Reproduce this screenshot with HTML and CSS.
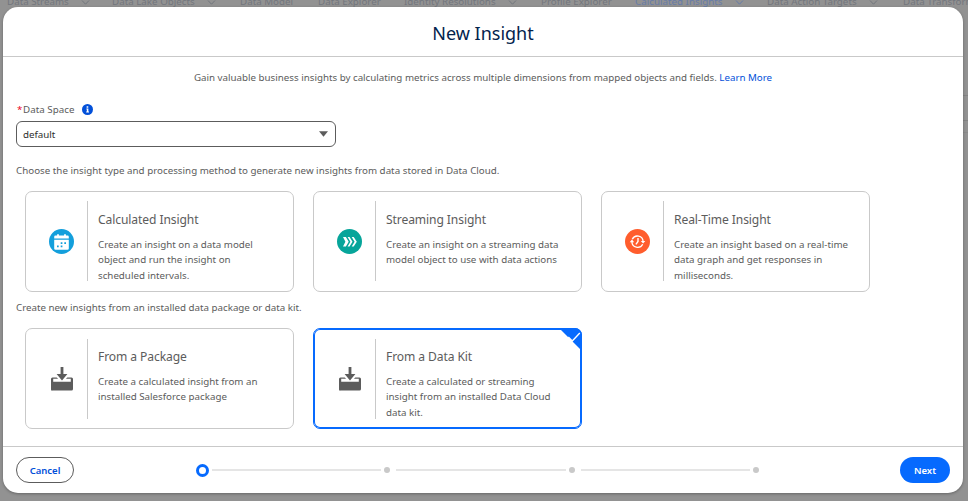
FILE: index.html
```html
<!DOCTYPE html>
<html lang="en">
<head>
<meta charset="utf-8">
<title>New Insight</title>
<link rel="stylesheet" href="styles.css">
</head>
<body>
<svg width="0" height="0" class="defs">
  <symbol id="chev" viewBox="0 0 9 6"><path d="M1 .5l3.500 3.700L8 .5" fill="none" stroke="currentColor"/></symbol>
  <symbol id="package" viewBox="0 0 22 24">
    <path d="M9.600 0h2.800v7h4L11 13.500 5.600 7h4z"/>
    <path d="M1.500 10.500h4.200l1.400 1.300H2.200v3h17.600v-3h-4.900l1.400-1.300h4.200q1.500 0 1.500 1.500v10q0 1.500-1.500 1.500h-19Q0 24 0 22.500V12q0-1.500 1.500-1.500z"/>
  </symbol>
</svg>
<nav class="tabs">
  <span class="tab">Data Streams<svg><use href="#chev"/></svg></span>
  <span class="tab">Data Lake Objects<svg><use href="#chev"/></svg></span>
  <span class="tab">Data Model</span>
  <span class="tab">Data Explorer</span>
  <span class="tab">Identity Resolutions<svg><use href="#chev"/></svg></span>
  <span class="tab">Profile Explorer</span>
  <span class="tab active">Calculated Insights<svg><use href="#chev"/></svg></span>
  <span class="tab">Data Action Targets<svg><use href="#chev"/></svg></span>
  <span class="tab">Data Transforms</span>
</nav>
<main class="modal">
  <header class="head"><h1>New Insight</h1></header>
  <section class="body">
    <p class="intro"><span>Gain valuable business insights by calculating metrics across multiple dimensions from mapped objects and fields.</span> <a>Learn More</a></p>
    <div class="label"><b>*</b><span>Data Space</span>
      <svg width="11" height="11" viewBox="0 0 10 10"><circle cx="5" cy="5" r="5" fill="#0250d9"/><path d="M4.200 2h1.500v1.300H4.200zM4 4.200h1.800v2.700h.6v.9H3.800v-.9h.6V5.100H4z" fill="#fff"/></svg>
    </div>
    <div class="select"><span>default</span><svg width="9" height="6" viewBox="0 0 9 6"><path d="M0 .2h9L4.500 5.800z" fill="#5c5c5c"/></svg></div>
    <p class="hint choose">Choose the insight type and processing method to generate new insights from data stored in Data Cloud.</p>
    <div class="cards">
      <article class="card">
        <div class="icon"><svg width="25" height="25" viewBox="0 0 25 25"><circle cx="12.500" cy="12.500" r="12.500" fill="#139fdc"/><path d="M6.500 6.500h1.600V6q0-.9.900-.9t.9.900v.5h5.200V6q0-.9.900-.9t.9.900v.5h1.600q1.300 0 1.300 1.300v1.700H5.200V7.800q0-1.300 1.300-1.300zM5.200 10.700h14.600v8.700q0 1.300-1.300 1.300h-12q-1.300 0-1.300-1.300z" fill="#fff"/><path d="M11.700 13.200h1.700v1.700h-1.700zM15.300 13.200H17v1.700h-1.700zM8 16.500h1.700v1.700H8zM11.700 16.500h1.700v1.700h-1.700z" fill="#139fdc"/></svg></div>
        <div class="copy"><h2>Calculated Insight</h2><p>Create an insight on a data model<br>object and run the insight on<br>scheduled intervals.</p></div>
      </article>
      <article class="card">
        <div class="icon"><svg width="25" height="25" viewBox="0 0 25 25"><circle cx="12.500" cy="12.500" r="12.500" fill="#06a59a"/><path d="M6 8h2.900l2.800 4.700-2.800 4.800H6l2.400-4.800zM10.600 8h1.900l3 4.700-3 4.800h-1.900l2.800-4.800zM14.700 8h2l3.100 4.700-3.100 4.800h-2l2.900-4.800z" fill="#fff"/></svg></div>
        <div class="copy"><h2>Streaming Insight</h2><p>Create an insight on a streaming data<br>model object to use with data actions</p></div>
      </article>
      <article class="card">
        <div class="icon"><svg width="25" height="25" viewBox="0 0 25 25"><circle cx="12.500" cy="12.500" r="12.500" fill="#ff5d2d"/><g fill="none" stroke="#fff" stroke-width="1.300"><path d="M7.300 10.200a5.700 5.700 0 0 1 10.800 2.300M17.700 15.200a5.700 5.700 0 0 1-10.800-2.400"/><path d="M13 9v3.500L10.900 15.300" stroke-width="1.400"/></g><path d="M15.800 11.900h4.500l-2.200 2.700zM4.700 13.300h4.500L7 10.600z" fill="#fff"/></svg></div>
        <div class="copy"><h2>Real-Time Insight</h2><p>Create an insight based on a real-time<br>data graph and get responses in<br>milliseconds.</p></div>
      </article>
    </div>
    <p class="hint create">Create new insights from an installed data package or data kit.</p>
    <div class="cards low">
      <article class="card">
        <div class="icon"><svg width="22" height="24" fill="#5c5c5c"><use href="#package"/></svg></div>
        <div class="copy"><h2>From a Package</h2><p>Create a calculated insight from an<br>installed Salesforce package</p></div>
      </article>
      <article class="card selected">
        <div class="icon"><svg width="22" height="24" fill="#5c5c5c"><use href="#package"/></svg></div>
        <div class="copy"><h2>From a Data Kit</h2><p>Create a calculated or streaming<br>insight from an installed Data Cloud<br>data kit.</p></div>
        <svg class="corner" width="23" height="23" viewBox="0 0 23 23"><path d="M0 0h23v23z" fill="#066afe"/><path d="M9.300 9.100l4 4 7.500-8" fill="none" stroke="#fff" stroke-width="1.400"/></svg>
      </article>
    </div>
  </section>
  <footer class="foot">
    <button class="cancel">Cancel</button>
    <div class="steps"><i class="now"></i><s></s><i></i><s></s><i></i><s></s><i></i></div>
    <button class="next">Next</button>
  </footer>
</main>
</body>
</html>
```
FILE: styles.css
```css
* { box-sizing: border-box; }
body { margin: 0; width: 968px; height: 501px; overflow: hidden; position: relative; background: linear-gradient(#838383, #838383) 963px 95px / 5px 1px no-repeat, linear-gradient(#838383, #838383) 963px 120px / 5px 1px no-repeat, linear-gradient(#8a8a8a, #8a8a8a) 963px 132px / 5px 1px no-repeat, #929292; font: 9.750px/15px "Noto Sans", sans-serif; color: #5c5c5c; }
h1, h2, p { margin: 0; font-weight: 400; white-space: nowrap; }
.defs { position: absolute; }
.tabs { height: 7px; display: grid; grid-template-columns: 105px 128px 78px 86px 137px 94px 132px 136px 110px; padding-left: 7px; white-space: nowrap; color: #72767d; line-height: 4px; letter-spacing: .02px; }
.tab svg { width: 9px; height: 6px; margin-left: 12px; vertical-align: -1px; }
.tab.active { color: #667ba8; }
.modal { position: relative; display: flex; flex-direction: column; width: 960px; height: 486px; margin-left: 3px; border-radius: 15px; background: #fff; box-shadow: 0 1px 3px rgba(0,0,0,.3); }
.head { height: 50px; border-bottom: 1px solid #c9c9c9; text-align: center; }
h1 { font-size: 18px; line-height: 52px; color: #03234d; }
.body { flex: 1; padding: 13px 13px 0; }
.intro { text-align: center; }
.intro a { color: #0250d9; }
.label { display: flex; align-items: center; height: 15px; margin-top: 17px; letter-spacing: .05px; }
.label b { color: #ea001e; font-weight: 400; width: 7px; padding-left: 1px; }
.label svg { margin-left: 7px; }
.select { display: flex; align-items: center; justify-content: space-between; width: 320px; height: 26px; margin-top: 4px; padding: 0 7px 0 6px; border: 1px solid #5c5c5c; border-radius: 6px; color: #2e2e2e; }
.choose { margin-top: 16px; letter-spacing: .02px; }
.create { margin-top: 8px; }
.cards { display: flex; gap: 19px; margin: 13px 0 0 9px; }
.card { position: relative; display: flex; width: 269px; height: 101px; padding: 9px 0 0; border: 1px solid #c9c9c9; border-radius: 7px; }
.low .card { padding-top: 10px; }
.icon { display: flex; align-items: center; justify-content: center; width: 62px; height: 80px; padding-left: 10px; border-right: 1px solid #c9c9c9; }
.copy { padding: 9px 0 0 10px; }
.low .copy { padding-top: 8px; }
h2 { font-size: 12.100px; line-height: 20px; letter-spacing: -.1px; }
.copy p { margin-top: 6.700px; line-height: 15.500px; }
.card.selected { border-color: #066afe; box-shadow: inset 0 0 0 1px #066afe; }
.corner { position: absolute; top: -1px; right: -1px; border-top-right-radius: 7px; }
.foot { display: flex; align-items: center; height: 47px; padding: 0 13px; border-top: 1px solid #c9c9c9; }
button { height: 26px; padding: 0; border-radius: 13px; font: 600 9.500px "Noto Sans", sans-serif; }
.cancel { width: 58px; border: 1px solid #5c5c5c; background: #fff; color: #0250d9; }
.next { width: 50px; margin-left: auto; border: 0; background: #066afe; color: #fff; }
.steps { display: flex; align-items: center; width: 563px; margin-left: 122px; }
.steps i { flex: none; width: 6px; height: 6px; border-radius: 50%; background: #c9c9c9; }
.steps i.now { width: 13px; height: 13px; border: 3px solid #066afe; background: #fff; margin-right: -3px; }
.steps s { flex: 1; height: 2px; margin: 0 3px 0 6px; background: #e5e5e5; }
```
